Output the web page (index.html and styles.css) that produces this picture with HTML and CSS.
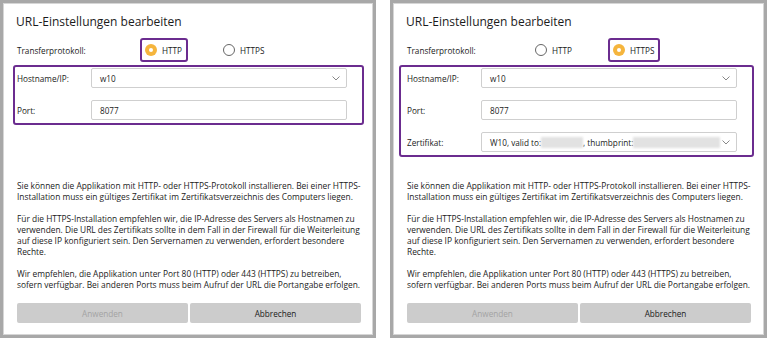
FILE: index.html
```html
<!DOCTYPE html>
<html lang="de">
<head>
<meta charset="utf-8">
<title>URL-Einstellungen bearbeiten</title>
<link rel="stylesheet" href="styles.css">
</head>
<body>
<div class="page">
  <section class="dialog">
    <h1 class="title">URL-Einstellungen bearbeiten</h1>
    <div class="proto-row">
      <span class="proto-label">Transferprotokoll:</span>
      <div class="radio-group">
        <div class="opt opt-marked"><span class="radio radio-on"></span><span>HTTP</span></div>
        <div class="opt"><span class="radio"></span><span>HTTPS</span></div>
      </div>
    </div>
    <div class="fields-area">
      <div class="fields-box">
        <div class="field-row">
          <span class="field-label">Hostname/IP:</span>
          <div class="combo"><span class="value">w10</span><svg class="chev" width="8" height="5" viewBox="0 0 8 5"><path d="M0.5 0.5 L4 4 L7.5 0.5" fill="none" stroke="#7a7a7a" stroke-width="0.9"/></svg></div>
        </div>
        <div class="field-row">
          <span class="field-label">Port:</span>
          <div class="textbox"><span class="value">8077</span></div>
        </div>
      </div>
    </div>
    <div class="info">
      <p>Sie können die Applikation mit HTTP- oder HTTPS-Protokoll installieren. Bei einer HTTPS-<br>Installation muss ein gültiges Zertifikat im Zertifikatsverzeichnis des Computers liegen.</p>
      <p>Für die HTTPS-Installation empfehlen wir, die IP-Adresse des Servers als Hostnamen zu<br>verwenden. Die URL des Zertifikats sollte in dem Fall in der Firewall für die Weiterleitung<br>auf diese IP konfiguriert sein. Den Servernamen zu verwenden, erfordert besondere<br>Rechte.</p>
      <p>Wir empfehlen, die Applikation unter Port 80 (HTTP) oder 443 (HTTPS) zu betreiben,<br>sofern verfügbar. Bei anderen Ports muss beim Aufruf der URL die Portangabe erfolgen.</p>
    </div>
    <div class="actions">
      <button class="btn btn-disabled" type="button">Anwenden</button>
      <button class="btn" type="button">Abbrechen</button>
    </div>
  </section>

  <section class="dialog dialog-wide">
    <h1 class="title">URL-Einstellungen bearbeiten</h1>
    <div class="proto-row">
      <span class="proto-label">Transferprotokoll:</span>
      <div class="radio-group">
        <div class="opt"><span class="radio"></span><span>HTTP</span></div>
        <div class="opt opt-marked"><span class="radio radio-on"></span><span>HTTPS</span></div>
      </div>
    </div>
    <div class="fields-area">
      <div class="fields-box">
        <div class="field-row">
          <span class="field-label">Hostname/IP:</span>
          <div class="combo"><span class="value">w10</span><svg class="chev" width="8" height="5" viewBox="0 0 8 5"><path d="M0.5 0.5 L4 4 L7.5 0.5" fill="none" stroke="#7a7a7a" stroke-width="0.9"/></svg></div>
        </div>
        <div class="field-row">
          <span class="field-label">Port:</span>
          <div class="textbox"><span class="value">8077</span></div>
        </div>
        <div class="field-row">
          <span class="field-label">Zertifikat:</span>
          <div class="combo"><span class="value">W10, valid to:<span class="blur blur-date"></span>, thumbprint:<span class="blur blur-thumb"></span></span><svg class="chev" width="8" height="5" viewBox="0 0 8 5"><path d="M0.5 0.5 L4 4 L7.5 0.5" fill="none" stroke="#7a7a7a" stroke-width="0.9"/></svg></div>
        </div>
      </div>
    </div>
    <div class="info">
      <p>Sie können die Applikation mit HTTP- oder HTTPS-Protokoll installieren. Bei einer HTTPS-<br>Installation muss ein gültiges Zertifikat im Zertifikatsverzeichnis des Computers liegen.</p>
      <p>Für die HTTPS-Installation empfehlen wir, die IP-Adresse des Servers als Hostnamen zu<br>verwenden. Die URL des Zertifikats sollte in dem Fall in der Firewall für die Weiterleitung<br>auf diese IP konfiguriert sein. Den Servernamen zu verwenden, erfordert besondere<br>Rechte.</p>
      <p>Wir empfehlen, die Applikation unter Port 80 (HTTP) oder 443 (HTTPS) zu betreiben,<br>sofern verfügbar. Bei anderen Ports muss beim Aufruf der URL die Portangabe erfolgen.</p>
    </div>
    <div class="actions">
      <button class="btn btn-disabled" type="button">Anwenden</button>
      <button class="btn" type="button">Abbrechen</button>
    </div>
  </section>
</div>
</body>
</html>
```

FILE: styles.css
```css
* { box-sizing: border-box; }
html, body { margin: 0; padding: 0; background: #ffffff; }
body {
  font-family: "Open Sans", "Noto Sans", sans-serif;
  color: #1b1b1b;
  width: 768px;
  height: 340px;
  overflow: hidden;
}
.page {
  display: flex;
  gap: 14px;
  height: 340px;
  align-items: flex-start;
}
.dialog {
  width: 376px;
  height: 338px;
  border: 3px solid #a8a8a8;
  box-shadow: inset 0 0 0 1px #d6d6d6;
  background: #ffffff;
  padding: 11px 12px 12px 14px;
  display: flex;
  flex-direction: column;
}
.dialog-wide { width: 377px; padding-right: 13px; }
.title {
  margin: 0 0 0 -1px;
  font-size: 12px;
  line-height: 16px;
  font-weight: 400;
  white-space: nowrap;
}
.proto-row {
  display: flex;
  align-items: center;
  height: 24px;
  margin-top: 8px;
  font-size: 8.2px;
}
.proto-label { width: 123px; font-size: 8.2px; }
.radio-group { display: flex; gap: 30px; }
.opt {
  display: flex;
  align-items: center;
  gap: 5px;
  height: 24px;
  padding: 0 4px 0 3px;
  border: 2px solid transparent;
  border-radius: 3px;
  font-size: 8.2px;
}
.opt-marked { border-color: #6b2c8f; }
.radio {
  width: 12px;
  height: 12px;
  border-radius: 50%;
  border: 1px solid #666666;
  background: #ffffff;
  flex: none;
}
.radio-on {
  border: none;
  box-shadow: inset 0 0 0 4px #f5b53d;
}
.fields-area {
  height: 115px;
  margin-top: 3px;
}
.fields-box {
  margin-left: -4px;
  width: 351px;
  border: 2px solid #6b2c8f;
  border-radius: 3px;
  padding: 1px 15px 3px 2px;
  display: flex;
  flex-direction: column;
  gap: 12px;
}
.dialog-wide .fields-box {
  margin-left: -8px;
  width: 355px;
  padding-left: 6px;
}
.field-row {
  display: flex;
  align-items: center;
  height: 20px;
  font-size: 8.2px;
}
.field-label { width: 74px; flex: none; }
.combo, .textbox {
  width: 256px;
  height: 20px;
  border: 1px solid #cfcfcf;
  border-radius: 2px;
  display: flex;
  align-items: center;
  padding: 0 6px 0 8px;
  background: #ffffff;
  white-space: nowrap;
}
.combo { justify-content: space-between; }
.value { display: flex; align-items: center; }
.chev { flex: none; }
.blur {
  display: inline-block;
  height: 11px;
  background: #e2e2e2;
  filter: blur(1px);
}
.blur-date { width: 42px; }
.blur-thumb { width: 87px; }
.info {
  font-size: 8.4px;
  line-height: 11px;
  white-space: nowrap;
}
.info p { margin: 0 0 11px 0; }
.info p:last-child { margin-bottom: 0; }
.actions {
  margin-top: auto;
  display: grid;
  grid-template-columns: 1fr 1fr;
  gap: 2px;
}
.btn {
  height: 20px;
  border: none;
  border-radius: 2px;
  background: #cccccc;
  font-family: "Open Sans", "Noto Sans", sans-serif;
  font-size: 8.2px;
  color: #1b1b1b;
  padding: 0;
}
.btn-disabled { color: #a3a3a3; }
```
